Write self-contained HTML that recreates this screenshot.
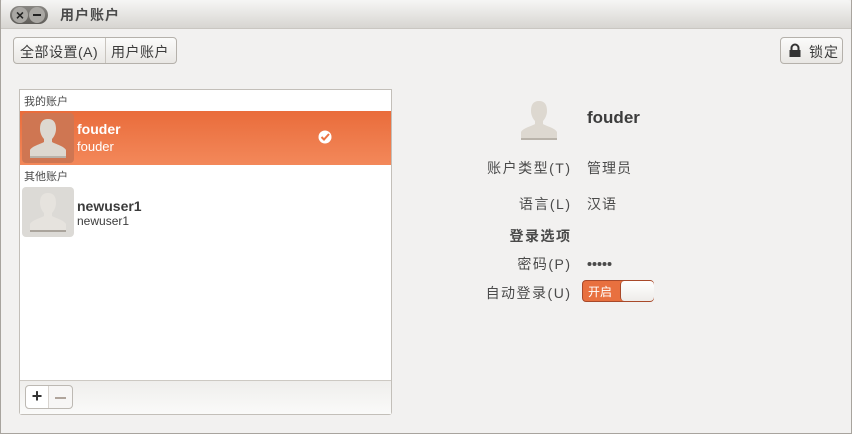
<!DOCTYPE html><html><head><meta charset="utf-8"><style>
*{margin:0;padding:0;box-sizing:border-box}
body{width:852px;height:434px;overflow:hidden;background:#f2f1f0;font-family:"Liberation Sans","Noto Sans CJK SC",sans-serif;font-size:13px;color:#3c3c3c;position:relative}
.abs{position:absolute}
#win{position:absolute;left:0;top:0;width:852px;height:434px;border:1px solid #a8a49e;border-top:none}
#title{position:absolute;left:0;top:0;width:852px;height:29px;background:linear-gradient(#f6f6f5,#d7d5d1);border-bottom:1px solid #c9c6c1;border-radius:5px 5px 0 0}
.btn{position:absolute;border:1px solid #b5b1ab;border-radius:4px;background:linear-gradient(#fbfbfa,#e9e7e4);font-size:14px;color:#3c3c3c}
.lbl{position:absolute;right:282px;font-size:14px;color:#4a4a4a;text-align:right;white-space:nowrap;letter-spacing:1.5px;margin-right:-1.5px}
.val{position:absolute;left:587px;font-size:14px;color:#4a4a4a;letter-spacing:1px}
</style></head><body>
<div id="title">
 <div class="abs" style="left:10px;top:6px;width:38px;height:18px;border-radius:9px;background:linear-gradient(#8a8884,#5f5d59);"></div>
 <div class="abs" style="left:12px;top:7px;width:16px;height:16px;border-radius:8px;background:#a9a7a3;font-size:14px;line-height:16px;text-align:center;color:#222;font-weight:bold">×</div>
 <div class="abs" style="left:29px;top:7px;width:16px;height:16px;border-radius:8px;background:#a9a7a3"><div class="abs" style="left:4px;top:7px;width:8px;height:2px;background:#222"></div></div>
 <div class="abs" style="left:60px;top:5px;font-size:14px;font-weight:bold;color:#4c4c4c;letter-spacing:1px">用户账户</div>
</div>
<div id="win"></div>
<div class="btn" style="left:13px;top:37px;width:164px;height:27px">
 <span class="abs" style="left:6px;top:4px;letter-spacing:0.5px">全部设置(A)</span>
 <div class="abs" style="left:91px;top:0;width:1px;height:25px;background:#c8c4be"></div>
 <span class="abs" style="left:97px;top:4px;letter-spacing:0.5px">用户账户</span>
</div>
<div class="btn" style="left:780px;top:37px;width:63px;height:27px">
 <svg class="abs" style="left:7px;top:5px" width="14" height="15" viewBox="0 0 14 15"><path d="M3.5 7V5a3.5 3.5 0 0 1 7 0v2" fill="none" stroke="#333" stroke-width="2"/><rect x="1.5" y="7" width="11" height="7" fill="#333"/></svg>
 <span class="abs" style="left:28px;top:4px;letter-spacing:1px">锁定</span>
</div>
<div class="abs" style="left:19px;top:89px;width:373px;height:326px;border:1px solid #c3bfb9;border-radius:0 0 3px 3px;background:#fff"></div>
<div class="abs" style="left:20px;top:380px;width:371px;height:34px;background:linear-gradient(#efeeec,#fafaf9);border-top:1px solid #cdc9c3"></div>
<div class="abs" style="left:25px;top:385px;width:48px;height:24px;border:1px solid #bdb9b3;border-radius:4px;background:#f7f6f5">
 <div class="abs" style="left:0;top:0;width:23px;height:22px;background:#fff;border-right:1px solid #d8d4cf;border-radius:4px 0 0 4px;font-size:18px;font-weight:bold;line-height:21px;text-align:center;color:#333">+</div>
 <div class="abs" style="left:29px;top:11px;width:11px;height:2px;background:#b0a59c"></div>
</div>
<div class="abs" style="left:24px;top:93px;font-size:11px;color:#4a4a4a">我的账户</div>
<div class="abs" style="left:20px;top:111px;width:371px;height:54px;background:linear-gradient(#e96c3b,#f3885a)"></div>
<div class="abs" style="left:22px;top:113px;width:52px;height:50px;border-radius:4px;background:#cf7652"></div>
<svg class="abs" style="left:28px;top:117px" width="40" height="42" viewBox="0 0 40 42"><path d="M20 2c6 0 8 4 8 10 0 4-2 8-4 10v3c3 2 12 4 14 8v6H2v-6c2-4 11-6 14-8v-3c-2-2-4-6-4-10 0-6 2-10 8-10z" fill="#ddd8d0"/><rect x="2" y="39" width="36" height="2" fill="#b9b3aa"/></svg>
<div class="abs" style="left:77px;top:121px;font-size:14px;font-weight:bold;color:#fff">fouder</div>
<div class="abs" style="left:77px;top:139px;font-size:13px;color:#fff">fouder</div>
<svg class="abs" style="left:318px;top:130px" width="14" height="14" viewBox="0 0 14 14"><circle cx="7" cy="7" r="6.5" fill="#fff"/><path d="M3.5 7l2.5 2.5L11 4" fill="none" stroke="#ec7444" stroke-width="2"/></svg>
<div class="abs" style="left:24px;top:168px;font-size:11px;color:#4a4a4a">其他账户</div>
<div class="abs" style="left:22px;top:187px;width:52px;height:50px;border-radius:4px;background:#dcdad6"></div>
<svg class="abs" style="left:28px;top:191px" width="40" height="42" viewBox="0 0 40 42"><path d="M20 2c6 0 8 4 8 10 0 4-2 8-4 10v3c3 2 12 4 14 8v6H2v-6c2-4 11-6 14-8v-3c-2-2-4-6-4-10 0-6 2-10 8-10z" fill="#e6e3de"/><rect x="2" y="39" width="36" height="2" fill="#aaa49c"/></svg>
<div class="abs" style="left:77px;top:198px;font-size:14px;font-weight:bold;color:#3c3c3c">newuser1</div>
<div class="abs" style="left:77px;top:214px;font-size:12px;color:#3c3c3c">newuser1</div>
<svg class="abs" style="left:519px;top:100px" width="40" height="41" viewBox="0 0 40 41"><path d="M20 1c6 0 8 4 8 10 0 4-2 8-4 10v3c3 2 12 4 14 8v6H2v-6c2-4 11-6 14-8v-3c-2-2-4-6-4-10 0-6 2-10 8-10z" fill="#ddd8d0"/><rect x="2" y="38" width="36" height="2" fill="#b9b3aa"/></svg>
<div class="abs" style="left:587px;top:108px;font-size:17px;font-weight:bold;color:#3c3c3c">fouder</div>
<div class="lbl" style="top:158px">账户类型(T)</div><div class="val" style="top:158px">管理员</div>
<div class="lbl" style="top:194px">语言(L)</div><div class="val" style="top:194px">汉语</div>
<div class="lbl" style="top:226px;font-weight:bold">登录选项</div>
<div class="lbl" style="top:254px">密码(P)</div>
<svg class="abs" style="left:587px;top:261px" width="26" height="6" viewBox="0 0 26 6"><g fill="#4a4a4a"><circle cx="2.5" cy="3" r="2"/><circle cx="7.5" cy="3" r="2"/><circle cx="12.5" cy="3" r="2"/><circle cx="17.5" cy="3" r="2"/><circle cx="22.5" cy="3" r="2"/></g></svg>
<div class="lbl" style="top:283px">自动登录(U)</div>
<div class="abs" style="left:582px;top:280px;width:72px;height:22px;border:1px solid #a8492a;border-radius:4px;background:#e8703f">
 <span class="abs" style="left:5px;top:2px;font-size:12px;color:#fff">开启</span>
 <div class="abs" style="left:37px;top:0;width:34px;height:20px;border-radius:4px;background:linear-gradient(#fff,#eeece9);border-left:1px solid #a8492a"></div>
</div>
</body></html>
